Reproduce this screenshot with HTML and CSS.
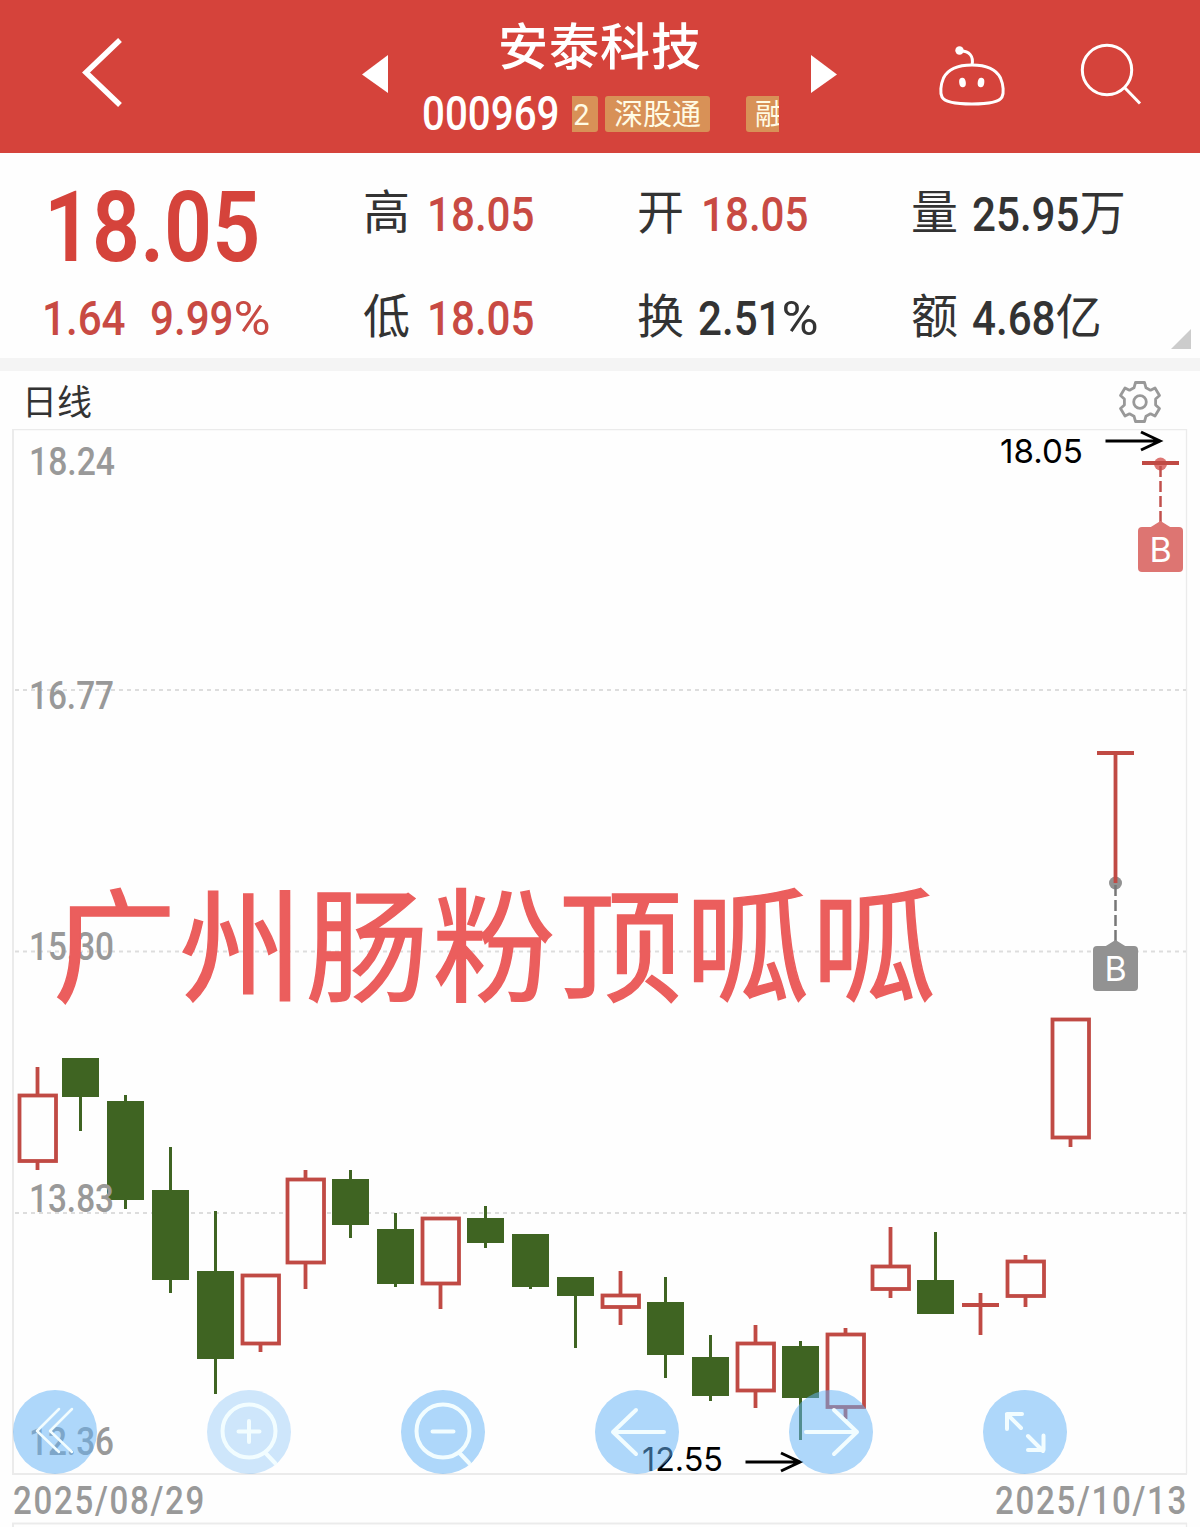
FILE: index.html
```html
<!DOCTYPE html>
<html lang="zh-CN">
<head>
<meta charset="utf-8">
<title>安泰科技 000969</title>
<link rel="stylesheet" href="styles.css">
</head>
<body>
<header class="topbar">
  <svg class="back" viewBox="0 0 50 80"><path d="M44 7 10 39.500 44 72"/></svg>
  <svg class="tri" viewBox="0 0 26 38"><path d="M26 0V38L0 19.500Z"/></svg>
  <div class="stock">
    <h1 class="name">安泰科技</h1>
    <div class="meta">
      <span class="code"><span class="din">000969</span></span>
      <div class="tags"><span class="tag tag-cut-left">2</span><span class="tag tag-main">深股通</span><span class="tag tag-cut-right">融</span></div>
    </div>
  </div>
  <svg class="tri tri-next" viewBox="0 0 26 38"><path d="M0 0V38L26 19.500Z"/></svg>
  <svg class="robot" viewBox="0 0 70 62">
    <path d="M36 20C50 20 60 24 64.500 33C67.500 40 68 48 66 52C63 58 50 59 36 59S9 58 6 52C4 48 4.500 40 7.500 33C12 24 22 20 36 20Z"/>
    <path d="M25 6C33 6 38 11 36 20"/>
    <circle class="solid" cx="23.500" cy="5.500" r="4.200"/>
    <ellipse class="solid" cx="26.500" cy="37.500" rx="3.300" ry="4.800" transform="rotate(-8 26.500 37.500)"/>
    <ellipse class="solid" cx="45" cy="37.500" rx="3.300" ry="4.800" transform="rotate(8 45 37.500)"/>
  </svg>
  <svg class="search" viewBox="0 0 64 64"><circle cx="28" cy="27" r="24.700"/><path d="M45 44 61 60.500"/></svg>
</header>

<section class="quote">
  <div class="price"><span class="din">18.05</span></div>
  <div class="pair"><span class="label">高</span><span class="din red">18.05</span></div>
  <div class="pair"><span class="label">开</span><span class="din red">18.05</span></div>
  <div class="pair"><span class="label">量</span><span class="din nudge">25.95<span class="unit">万</span></span></div>
  <div class="change"><span class="din">1.64</span><span class="din">9.99<span class="pct">%</span></span></div>
  <div class="pair"><span class="label">低</span><span class="din red">18.05</span></div>
  <div class="pair"><span class="label">换</span><span class="din nudge">2.51<span class="pct">%</span></span></div>
  <div class="pair"><span class="label">额</span><span class="din nudge">4.68<span class="unit">亿</span></span></div>
  <i class="corner"></i>
</section>

<section class="chart">
  <div class="chart-head">
    <span>日线</span>
    <svg class="gear" viewBox="-22 -22 44 44"><path d="M-4.500 -19.500H4.500L6 -14.200L10.500 -11.800L15 -14L19.500 -6.500L15.600 -3V3L19.500 6.500L15 14L10.500 11.800L6 14.200L4.500 19.500H-4.500L-6 14.200L-10.500 11.800L-15 14L-19.500 6.500L-15.600 3V-3L-19.500 -6.500L-15 -14L-10.500 -11.800L-6 -14.200Z"/><circle r="6.300"/></svg>
  </div>
  <svg class="plot" viewBox="0 429 1200 1098">
    <g class="frame">
      <path d="M13 429.500H1187M1186.500 429V1474M1186.500 1523V1527" stroke-width="1.300"/>
      <path d="M13 429V1474H1187M13 1527V1523.500H1187" stroke-width="2"/>
    </g>
    <path class="grid" d="M15 690H1186M15 951.500H1186M15 1213H1186"/>

    <g class="up">
      <path d="M37.500 1067V1095M37.500 1162V1170M260.500 1345V1352M305.500 1170V1178M305.500 1264V1289M440.500 1285V1309M620.500 1271V1294M620.500 1308V1325M755.500 1325V1342M755.500 1392V1408M845.500 1328V1333M845.500 1408V1419M890.500 1227V1265M890.500 1290V1298M980.500 1293V1335M962 1305H999M1025.500 1255V1260M1025.500 1297V1307M1070.500 1139V1147"/>
      <rect x="19.500" y="1095.500" width="36.500" height="65.500"/>
      <rect x="242.500" y="1275.500" width="36.500" height="68"/>
      <rect x="287.500" y="1179.500" width="36.500" height="83"/>
      <rect x="422.500" y="1218.500" width="36.500" height="65"/>
      <rect x="602.500" y="1295.500" width="36.500" height="11.500"/>
      <rect x="737.500" y="1343.500" width="36.500" height="47"/>
      <rect x="827.500" y="1334.500" width="36.500" height="72.500"/>
      <rect x="872.500" y="1266.500" width="36.500" height="22.500"/>
      <rect x="1007.500" y="1261.500" width="36.500" height="34.500"/>
      <rect x="1052.500" y="1019.500" width="36.500" height="118"/>
    </g>
    <g class="down">
      <path d="M80.500 1090V1131M125.500 1095V1209M170.500 1147V1293M215.500 1211V1394M350.500 1170V1238M395.500 1213V1287M485.500 1206V1248M530.500 1280V1289M575.500 1290V1348M665.500 1277V1378M710.500 1335V1401M800.500 1341V1440M935.500 1232V1290"/>
      <rect x="62" y="1058" width="37" height="39"/>
      <rect x="107" y="1101" width="37" height="99"/>
      <rect x="152" y="1190" width="37" height="90"/>
      <rect x="197" y="1271" width="37" height="88"/>
      <rect x="332" y="1179" width="37" height="46"/>
      <rect x="377" y="1229" width="37" height="55"/>
      <rect x="467" y="1218" width="37" height="25"/>
      <rect x="512" y="1234" width="37" height="53"/>
      <rect x="557" y="1277" width="37" height="19"/>
      <rect x="647" y="1302" width="37" height="53"/>
      <rect x="692" y="1357" width="37" height="39"/>
      <rect x="782" y="1346" width="37" height="52"/>
      <rect x="917" y="1280" width="37" height="34"/>
    </g>

    <g class="mark mark-gray">
      <circle cx="1115.500" cy="883" r="6.500"/>
      <path class="dash" d="M1115.500 885V941"/>
      <path d="M1105 946.500 1115.500 940 1126 946.500Z"/>
      <rect x="1093" y="946" width="45" height="45" rx="4"/>
      <text x="1115.500" y="981">B</text>
    </g>
    <g class="up"><path d="M1097 753H1134M1115.500 753V883"/></g>
    <g class="mark mark-red">
      <circle cx="1160.500" cy="464" r="6.500"/>
      <path class="dash" d="M1160.500 466V522"/>
      <path d="M1150 527.500 1160.500 521 1171 527.500Z"/>
      <rect x="1138" y="527" width="45" height="45" rx="4"/>
      <text x="1160.500" y="562">B</text>
    </g>
    <g class="up"><path d="M1142 463H1179"/></g>

    <g class="axis">
      <text x="29" y="475" textLength="86" lengthAdjust="spacingAndGlyphs">18.24</text>
      <text x="29" y="709" textLength="85" lengthAdjust="spacingAndGlyphs">16.77</text>
      <text x="29" y="960" textLength="85" lengthAdjust="spacingAndGlyphs">15.30</text>
      <text x="29" y="1212" textLength="85" lengthAdjust="spacingAndGlyphs">13.83</text>
      <text x="29" y="1455" textLength="85" lengthAdjust="spacingAndGlyphs">12.36</text>
      <text class="date" x="13" y="1514" textLength="193" lengthAdjust="spacingAndGlyphs">2025/08/29</text>
      <text class="date" x="995" y="1514" textLength="193" lengthAdjust="spacingAndGlyphs">2025/10/13</text>
    </g>

    <g class="extreme">
      <text x="1000" y="463" textLength="83" lengthAdjust="spacingAndGlyphs">18.05</text>
      <path d="M1105.500 441H1160M1141 432 1160 441 1141 450"/>
      <text x="642" y="1471" textLength="81" lengthAdjust="spacingAndGlyphs">12.55</text>
      <path d="M745.500 1462H800M781 1453 800 1462 781 1471"/>
    </g>
    <text class="caption" x="53" y="992" textLength="882">广州肠粉顶呱呱</text>
  </svg>
  <nav class="tools">
    <svg viewBox="0 0 84 84"><circle class="disc" cx="42" cy="42" r="42"/><path class="thin" d="M46 19 24 41 46 62M59 19 37 41 59 62"/></svg>
    <svg class="faded" viewBox="0 0 84 84"><circle class="disc" cx="42" cy="42" r="42"/><circle class="line" cx="42" cy="41" r="26.500"/><path class="line" d="M42 31V52M31.500 41.500H52.500M58.500 63 68 73"/></svg>
    <svg viewBox="0 0 84 84"><circle class="disc" cx="42" cy="42" r="42"/><circle class="line" cx="42" cy="41" r="26.500"/><path class="line" d="M31.500 41.500H52.500M58.500 63 68 73"/></svg>
    <svg viewBox="0 0 84 84"><circle class="disc" cx="42" cy="42" r="42"/><path class="line" d="M69 42H18M41 20 18 42 41 64"/></svg>
    <svg viewBox="0 0 84 84"><circle class="disc" cx="42" cy="42" r="42"/><path class="line" d="M17 42H68M45 20 68 42 45 64"/></svg>
    <svg viewBox="0 0 84 84"><circle class="disc" cx="42" cy="42" r="42"/><path class="line" d="M38 38 24 24M24 39V24H39M45 46 60 61M45 60H60.500V45.500"/></svg>
  </nav>
</section>
</body>
</html>
```
FILE: styles.css
```css
* { box-sizing: border-box; }
body {
  margin: 0;
  width: 1200px;
  height: 1527px;
  overflow: hidden;
  background: #fefefe;
  color: #333;
  font-family: Roboto, "Noto Sans CJK SC", sans-serif;
}
svg { display: block; flex: none; }

.din {
  display: inline-block;
  font-weight: 500;
  transform: scaleX(.86);
  transform-origin: 0 50%;
  white-space: nowrap;
}
.red { color: #c84a43; }

.topbar {
  display: flex;
  height: 153px;
  padding-left: 76px;
  background: #d5433b;
  color: #fff;
}
.back { width: 50px; height: 80px; margin-top: 33px; fill: none; stroke: #fff; stroke-width: 5.500; }
.tri { width: 26px; height: 38px; margin: 55px 0 0 236px; fill: #fff; }
.tri-next { margin-left: 32px; }
.stock { width: 391px; padding: 12px 0 0 33px; }
.name {
  margin: 0;
  padding-left: 77px;
  height: 62px;
  font: 500 50px/62px "Noto Sans CJK SC", sans-serif;
  letter-spacing: 1px;
}
.meta { display: flex; align-items: center; height: 80px; }
.code { width: 151px; padding-left: 1px; font-size: 48px; line-height: 60px; }
.code .din { transform: scaleX(.84); }
.tags { display: flex; width: 207px; height: 36px; overflow: hidden; }
.tag {
  flex: none;
  height: 36px;
  border-radius: 3px;
  background: #d89157;
  color: #fffbe4;
  font: 400 29px/38px Roboto, "Noto Sans CJK SC", sans-serif;
  text-align: center;
}
.tag-cut-left { width: 26px; padding-right: 7px; border-radius: 0 3px 3px 0; }
.tag-main { width: 105px; margin-left: 7px; }
.tag-cut-right { width: 34px; margin-left: 36px; padding-left: 9px; text-align: left; overflow: hidden; border-radius: 3px 0 0 3px; }
.robot { width: 70px; height: 62px; margin: 45px 0 0 99px; fill: none; stroke: #fff; stroke-width: 3; }
.solid { fill: #fff; stroke: none; }
.search { width: 64px; height: 64px; margin: 43px 0 0 73px; fill: none; stroke: #fff; stroke-width: 3; }

.quote {
  position: relative;
  display: grid;
  grid-template-columns: 363px 274px 274px 289px;
  grid-template-rows: 110px 95px;
  height: 205px;
}
.price { padding: 7px 0 0 44px; font-size: 99px; line-height: 134px; color: #d5433b; }
.price .din { font-weight: 600; transform: scaleX(.85); }
.change { display: flex; padding-left: 42px; color: #c84a43; font-size: 49px; line-height: 112px; }
.change .din:first-child { width: 108px; }
.pair { display: flex; height: 110px; font-size: 49px; line-height: 124px; }
.change ~ .pair { line-height: 112px; }
.label { width: 64px; font: 400 47px/112px "Noto Sans CJK SC", sans-serif; }
.change ~ .pair .label { line-height: 100px; }
.nudge { margin-left: -3px; }
.unit { font: 400 48px/1 "Noto Sans CJK SC", sans-serif; display: inline-block; transform: translateY(-1px) scaleX(1.120); transform-origin: 0 50%; }
.pct { display: inline-block; font-weight: 400; transform: scaleX(1.200); transform-origin: 0 50%; }
.corner {
  position: absolute;
  right: 9px;
  bottom: 9px;
  width: 20px;
  height: 20px;
  background: #ccc;
  clip-path: polygon(100% 0, 100% 100%, 0 100%);
}

.chart { position: relative; border-top: 13px solid #f4f4f4; }
.chart-head {
  display: flex;
  justify-content: space-between;
  align-items: center;
  height: 58px;
  padding: 3px 38px 0 22px;
  font: 400 35px/58px "Noto Sans CJK SC", sans-serif;
}
.chart-head span { margin-top: -3px; }
.gear { width: 44px; height: 44px; fill: none; stroke: #999; stroke-width: 2.800; stroke-linejoin: round; }
.plot { width: 1200px; height: 1098px; }
.frame { fill: none; stroke: #ebebeb; }
.grid { fill: none; stroke: #ddd; stroke-width: 2; stroke-dasharray: 4 4; }
.up { fill: #fefefe; stroke: #c04a44; stroke-width: 3.800; }
.down { fill: #3f6422; }
.down path { fill: none; stroke: #3f6422; stroke-width: 3; }
.mark text { fill: #fff; font: 400 34px Inter, sans-serif; text-anchor: middle; }
.mark .dash { fill: none; stroke-width: 2.500; stroke-dasharray: 11 4; }
.mark-gray { fill: #929292; }
.mark-gray .dash { stroke: #777; }
.mark-red { fill: #dd7572; }
.mark-red .dash { stroke: #c1504c; }
.axis { fill: #999; font: 500 39px Roboto, sans-serif; }
.date { letter-spacing: 2px; }
.extreme text { fill: #000; font: 400 33px Inter, sans-serif; }
.extreme path { fill: none; stroke: #000; stroke-width: 3; }
.caption { fill: #eb5e5d; stroke: #eb5e5d; stroke-width: 1.400; font: 400 123px "Noto Sans CJK SC", sans-serif; }

.tools { position: absolute; left: 13px; top: 1019px; display: flex; gap: 110px; }
.tools svg { width: 84px; height: 84px; }
.disc { fill: #64b2f6; opacity: .52; }
.faded .disc { opacity: .31; }
.line, .thin { fill: none; stroke: #f2fdff; stroke-width: 4; stroke-linecap: round; stroke-linejoin: round; }
.thin { stroke-width: 2.500; }
```
